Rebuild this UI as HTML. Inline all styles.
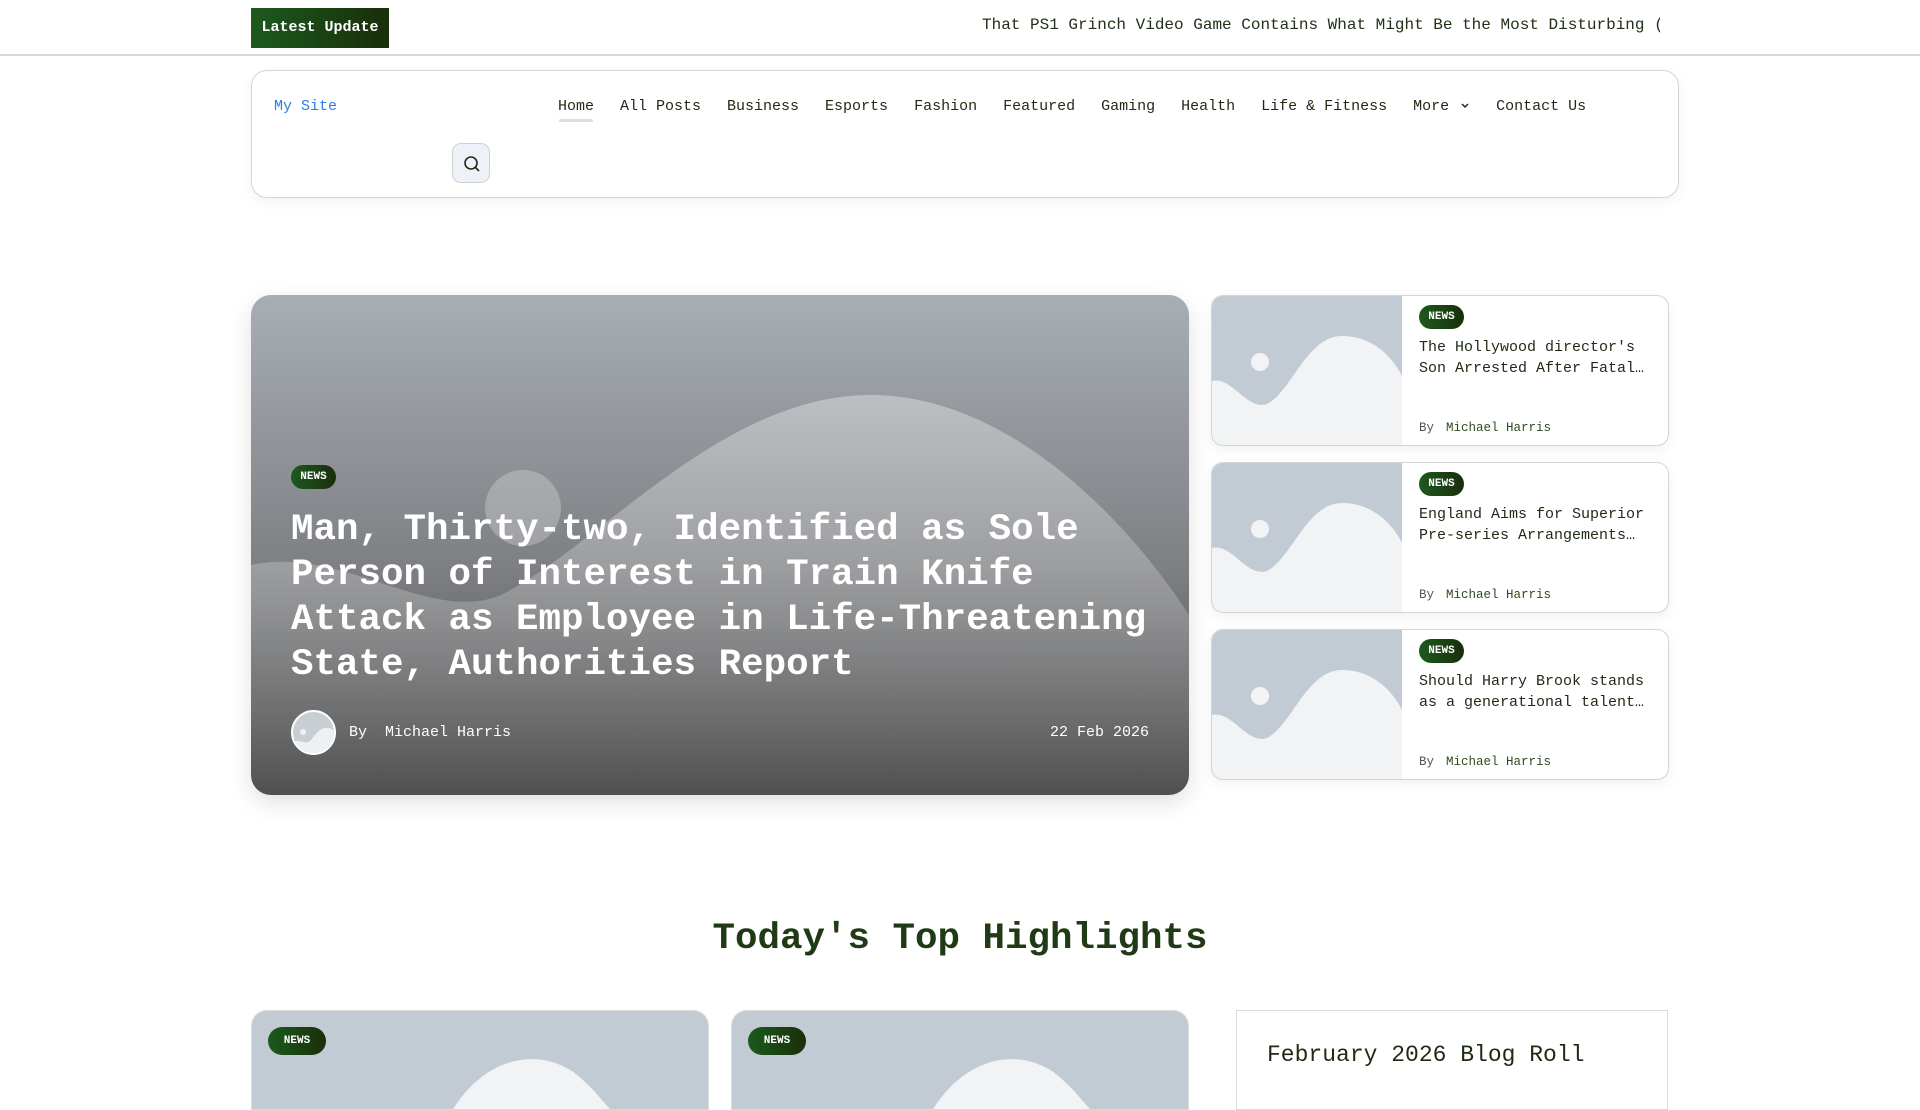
<!DOCTYPE html>
<html><head><meta charset="utf-8"><style>
*{margin:0;padding:0;box-sizing:border-box}
body{width:1920px;height:1080px;overflow:hidden;background:#fff;font-family:"Liberation Mono",monospace;color:#1e2a14;position:relative}
.abs{position:absolute}
.topbar{left:0;top:0;width:1920px;height:56px;border-bottom:2px solid #d5dcdc}
.latest{left:251px;top:8px;width:138px;height:40px;background:linear-gradient(90deg,#1c5a1e,#1a2e0a);color:#fff;font-weight:bold;font-size:15px;line-height:40px;text-align:center}
.ticker{left:982px;top:16px;width:678px;font-size:16px;white-space:nowrap;overflow:hidden;color:#233018}
.header{left:251px;top:70px;width:1428px;height:128px;border:1px solid #cfd8d6;border-radius:16px;box-shadow:0 4px 14px rgba(0,0,0,.05)}
.mysite{left:274px;top:98px;color:#2a7be4;font-size:15px}
.nav{left:558px;top:98px;display:flex;gap:26px;font-size:15px;color:#1e2a14}
.nav span{position:relative}
.nav .home:after{content:"";position:absolute;left:1px;right:1px;top:21px;height:3px;border-radius:2px;background:#d4e2d2}
.search{left:452px;top:143px;width:38px;height:40px;border:1px solid #cbd3d3;border-radius:9px;background:#eef2f8}
.hero{left:251px;top:295px;width:938px;height:500px;border-radius:20px;overflow:hidden;box-shadow:0 8px 24px rgba(0,0,0,.12)}
.badge{background:linear-gradient(90deg,#1c5a1e,#1a2e0a);color:#fff;font-weight:bold;font-size:11px;border-radius:14px;text-align:center}
.htitle{left:40px;top:213px;width:880px;color:#fff;font-weight:bold;font-size:37.5px;line-height:45px}
.card{width:458px;height:151px;border:1px solid #cfd8d6;border-radius:12px;overflow:hidden;box-shadow:0 4px 12px rgba(0,0,0,.06);background:#fff}
.ctitle{left:207px;top:41px;width:235px;font-size:15px;line-height:21px;color:#1e2a14}
.by{left:207px;top:125px;font-size:12.5px;color:#555}
.by b{font-weight:normal;color:#2f4a20;margin-left:12px}
.h2{left:0;width:1920px;top:918px;text-align:center;font-weight:bold;font-size:37.5px;color:#1f3a14}
.bcard{top:1010px;width:458px;height:100px;border-radius:16px 16px 0 0;overflow:hidden;border:1px solid #d5dcdc}
</style></head><body>
<div class="abs topbar"></div>
<div class="abs latest">Latest Update</div>
<div class="abs ticker">That PS1 Grinch Video Game Contains What Might Be the Most Disturbing (</div>
<div class="abs header"></div>
<div class="abs mysite">My Site</div>
<div class="abs nav"><span class="home">Home</span><span>All Posts</span><span>Business</span><span>Esports</span><span>Fashion</span><span>Featured</span><span>Gaming</span><span>Health</span><span>Life &amp; Fitness</span><span>More <svg width="10" height="8" viewBox="0 0 10 8" style="margin-left:2px"><path d="M2 2l3 3 3-3" stroke="#1e2a14" stroke-width="1.5" fill="none"/></svg></span><span>Contact Us</span></div>
<div class="abs search"><svg width="38" height="40" viewBox="0 0 38 40"><circle cx="18" cy="19" r="6" stroke="#1e2a14" stroke-width="1.6" fill="none"/><path d="M22.5 23.5l3.5 3.5" stroke="#1e2a14" stroke-width="1.6"/></svg></div>

<div class="abs hero">
<svg width="938" height="500" viewBox="0 0 938 500" style="position:absolute;left:0;top:0">
<defs><linearGradient id="g" x1="0" y1="0" x2="0" y2="1"><stop offset="0" stop-color="#a8aeb5"/><stop offset="0.55" stop-color="#7d7f82"/><stop offset="1" stop-color="#414141"/></linearGradient>
<linearGradient id="m" x1="0" y1="0" x2="0" y2="1"><stop offset="0" stop-color="#fff" stop-opacity=".35"/><stop offset="1" stop-color="#fff" stop-opacity=".08"/></linearGradient></defs>
<rect width="938" height="500" fill="url(#g)"/>
<path d="M0 270 C90 250 180 330 250 300 C350 250 470 100 620 100 C760 100 880 230 938 320 L938 500 L0 500Z" fill="url(#m)"/>
<circle cx="272" cy="213" r="38" fill="#fff" fill-opacity=".25"/>
</svg>
<div class="abs badge" style="left:40px;top:170px;width:45px;height:24px;line-height:24px">NEWS</div>
<div class="abs htitle">Man, Thirty-two, Identified as Sole Person of Interest in Train Knife Attack as Employee in Life-Threatening State, Authorities Report</div>
<div class="abs" style="left:40px;top:415px;width:45px;height:45px;border-radius:50%;border:2px solid #fff;background:#c9ced3;overflow:hidden"><svg width="41" height="41"><path d="M0 30 C8 26 12 34 18 28 C24 20 30 12 41 18 L41 41 L0 41Z" fill="#eef1f3"/><circle cx="10" cy="20" r="3" fill="#eef1f3"/></svg></div>
<div class="abs" style="left:98px;top:429px;color:#fff;font-size:15px">By &nbsp;Michael Harris</div>
<div class="abs" style="right:40px;top:429px;color:#fff;font-size:15px">22 Feb 2026</div>
</div>

<div class="abs card" style="left:1211px;top:295px">
<svg width="190" height="151" style="position:absolute;left:0;top:0"><rect width="190" height="151" fill="#c2cbd3"/><path d="M0 85 C20 80 35 115 55 108 C80 95 95 40 130 40 C160 40 180 60 190 80 L190 151 L0 151Z" fill="#f1f3f5"/><circle cx="48" cy="66" r="9" fill="#f1f3f5"/></svg>
<div class="abs badge" style="left:207px;top:9px;width:45px;height:24px;line-height:24px">NEWS</div>
<div class="abs ctitle">The Hollywood director's Son Arrested After Fatal…</div>
<div class="abs by">By<b>Michael Harris</b></div></div>
<div class="abs card" style="left:1211px;top:462px">
<svg width="190" height="151" style="position:absolute;left:0;top:0"><rect width="190" height="151" fill="#c2cbd3"/><path d="M0 85 C20 80 35 115 55 108 C80 95 95 40 130 40 C160 40 180 60 190 80 L190 151 L0 151Z" fill="#f1f3f5"/><circle cx="48" cy="66" r="9" fill="#f1f3f5"/></svg>
<div class="abs badge" style="left:207px;top:9px;width:45px;height:24px;line-height:24px">NEWS</div>
<div class="abs ctitle">England Aims for Superior Pre-series Arrangements…</div>
<div class="abs by">By<b>Michael Harris</b></div></div>
<div class="abs card" style="left:1211px;top:629px">
<svg width="190" height="151" style="position:absolute;left:0;top:0"><rect width="190" height="151" fill="#c2cbd3"/><path d="M0 85 C20 80 35 115 55 108 C80 95 95 40 130 40 C160 40 180 60 190 80 L190 151 L0 151Z" fill="#f1f3f5"/><circle cx="48" cy="66" r="9" fill="#f1f3f5"/></svg>
<div class="abs badge" style="left:207px;top:9px;width:45px;height:24px;line-height:24px">NEWS</div>
<div class="abs ctitle">Should Harry Brook stands as a generational talent…</div>
<div class="abs by">By<b>Michael Harris</b></div></div>

<div class="abs h2">Today's Top Highlights</div>

<div class="abs bcard" style="left:251px"><svg width="458" height="100" style="position:absolute"><rect width="458" height="100" fill="#c2cbd3"/><path d="M200 100 C230 50 280 35 320 60 C340 75 350 90 360 100Z" fill="#f1f3f5"/></svg><div class="abs badge" style="left:16px;top:16px;width:58px;height:28px;line-height:28px;font-size:11px">NEWS</div></div>
<div class="abs bcard" style="left:731px"><svg width="458" height="100" style="position:absolute"><rect width="458" height="100" fill="#c2cbd3"/><path d="M200 100 C230 50 280 35 320 60 C340 75 350 90 360 100Z" fill="#f1f3f5"/></svg><div class="abs badge" style="left:16px;top:16px;width:58px;height:28px;line-height:28px;font-size:11px">NEWS</div></div>
<div class="abs" style="left:1236px;top:1010px;width:432px;height:100px;border:1px solid #d5dcdc"></div>
<div class="abs" style="left:1267px;top:1042px;font-size:23px;color:#1e2a14">February 2026 Blog Roll</div>
</body></html>
